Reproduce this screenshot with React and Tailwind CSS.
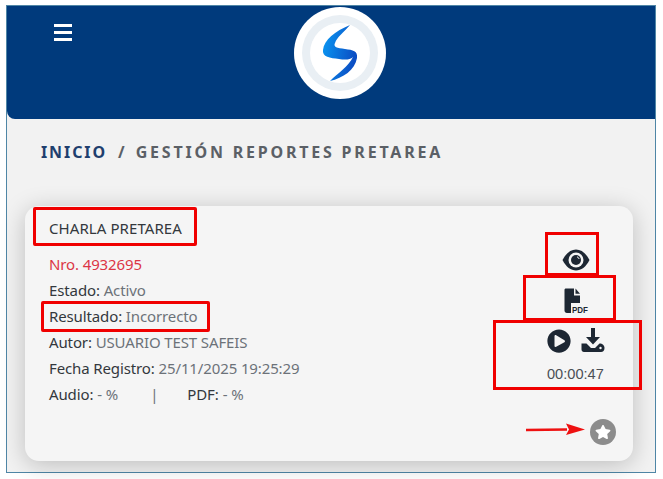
import { FaPlayCircle, FaStar } from 'react-icons/fa';

const Logo = () => (
  <div className="ml-[18px] flex h-[92px] w-[92px] items-center justify-center rounded-full bg-white">
    <div className="flex h-[76px] w-[76px] items-center justify-center rounded-full bg-[#e9eff4]">
      <div className="flex h-[60px] w-[60px] items-center justify-center rounded-full bg-white">
        <svg width="36" height="58" viewBox="0 0 36 58" className="shrink-0">
          <defs>
            <linearGradient id="logoBlue" x1="0" y1="0" x2="1" y2="0.3">
              <stop offset="0" stopColor="#0a9bf5" />
              <stop offset="1" stopColor="#0b4fc4" />
            </linearGradient>
          </defs>
          <path
            d="M28 1 C13 7 2 16 1 26 C0 33 8 34 17 35 C23 36 28 36 31 33 C27 42 15 50 8 57 C21 54 33 46 35 34 C36 27 31 26 23 25 C15 24 11 23 13 19 C15 13 22 8 28 1 Z"
            fill="url(#logoBlue)"
          />
        </svg>
      </div>
    </div>
  </div>
);

const EyeIcon = () => (
  <svg width="28" height="22" viewBox="0 0 28 22">
    <path d="M0.500 11 C4 4 9 0.500 14 0.500 C19 0.500 24 4 27.500 11 C24 18 19 21.500 14 21.500 C9 21.500 4 18 0.500 11 Z" fill="#1d2733" />
    <circle cx="14" cy="11" r="7.500" fill="#f5f5f5" />
    <circle cx="14" cy="11" r="5" fill="#1d2733" />
    <path d="M15 7.800 A3.400 3.400 0 0 1 17.200 10" stroke="#f5f5f5" strokeWidth="1" fill="none" />
  </svg>
);

const PdfIcon = () => (
  <svg width="25" height="26" viewBox="0 0 25 26" fill="#1d2733">
    <path d="M2 0.500 H10 V7.500 H16 V15 H7 V25 H3 C1.500 25 0.500 24 0.500 22.500 V2 C0.500 1 1 0.500 2 0.500 Z" />
    <path d="M11.500 0.500 L16 5.800 H11.500 Z" />
    <text x="8" y="24.500" fontSize="9" fontWeight="700" textLength="16" lengthAdjust="spacingAndGlyphs" fontFamily="'Liberation Sans', sans-serif">PDF</text>
  </svg>
);

const DownloadIcon = () => (
  <svg width="24" height="25" viewBox="0 0 24 25" fill="#1d2733">
    <path d="M10 0 H14 V9 H19 L12 16.500 L5 9 H10 Z" />
    <path d="M0.500 15.500 H5.500 L10 20 H14 L18.500 15.500 C21.500 15.500 23.500 17.500 23.500 20 C23.500 22.500 22 24 20 24 H3 C1.500 24 0.500 23 0.500 21.500 Z" />
    <circle cx="19.500" cy="20" r="1.200" fill="#f5f5f5" />
  </svg>
);

const Row = ({ label, value }) => (
  <p className="h-[26px] leading-[26px] whitespace-nowrap">
    <span className="text-[#33383d]">{label}:</span> <span className="text-[#6c7279]">{value}</span>
  </p>
);

const App = () => {
  return (
    <div className="relative h-[479px] w-[663px] overflow-hidden bg-white pt-[5px] pl-[6px] font-['Noto_Sans','Open_Sans',sans-serif]">
      <div className="flex h-[468px] w-[650px] flex-col border border-[#4f86a6] bg-[#f2f2f2]">
        <header className="flex h-[113px] shrink-0 justify-center rounded-bl-[8px] bg-[#003a7c] pt-[1px]">
          <Logo />
        </header>
        <div className="flex-1 px-[18px]">
          <h1 className="mt-[22px] ml-[16px] flex text-[16px] leading-[22px] font-bold whitespace-nowrap">
            <span className="tracking-[1.900px] text-[#1f3f6e]">INICIO</span>
            <span className="mx-[11px] text-[#5b6066]">/</span>
            <span className="tracking-[2.800px] text-[#5b6066]">GESTIÓN REPORTES PRETAREA</span>
          </h1>
          <section className="mt-[43px] h-[255px] w-[608px] rounded-[14px] bg-[#f5f5f5] pt-[10px] pl-[24px] text-[15px] tracking-[-0.120px] shadow-[0_4px_24px_rgba(0,0,0,0.22)]">
            <h2 className="text-[15px] leading-[24px] tracking-[0.080px] text-[#33383d]">CHARLA PRETAREA</h2>
            <div className="mt-[12px]">
              <p className="h-[25px] leading-[25px] text-[#dc3545]">Nro. 4932695</p>
              <Row label="Estado" value="Activo" />
              <Row label="Resultado" value="Incorrecto" />
              <Row label="Autor" value="USUARIO TEST SAFEIS" />
              <Row label="Fecha Registro" value="25/11/2025 19:25:29" />
              <div className="flex h-[26px] items-center whitespace-nowrap">
                <span className="text-[#33383d]">Audio:</span>
                <span className="ml-1 text-[#6c7279]">- %</span>
                <span className="ml-[32px] text-[#6c7279]">|</span>
                <span className="ml-[29px] text-[#33383d]">PDF:</span>
                <span className="ml-1 text-[#6c7279]">- %</span>
              </div>
            </div>
          </section>
        </div>
      </div>

      <button className="absolute top-[24px] left-[54px] flex flex-col gap-[4px]">
        <span className="h-[3px] w-[18px] bg-white" />
        <span className="h-[3px] w-[18px] bg-white" />
        <span className="h-[3px] w-[18px] bg-white" />
      </button>

      <div className="absolute top-[249px] left-[562px] flex"><EyeIcon /></div>
      <div className="absolute top-[288px] left-[564px] flex"><PdfIcon /></div>
      <FaPlayCircle className="absolute top-[329px] left-[547px] text-[24px] text-[#1d2733]" />
      <div className="absolute top-[328px] left-[581px] flex"><DownloadIcon /></div>
      <span className="absolute top-[364px] left-[547px] font-['Liberation_Sans',sans-serif] text-[14.600px] leading-[20px] text-[#4a4f55]">00:00:47</span>
      <div className="absolute top-[419px] left-[590px] flex h-[26px] w-[26px] items-center justify-center rounded-full bg-[#8c8c8c]">
        <FaStar className="text-[16px] text-white" />
      </div>

      {/* anotaciones rojas sobre la captura */}
      <div className="absolute top-[207px] left-[33px] h-[39px] w-[164px] rounded-[2px] border-[3px] border-[#f00000]" />
      <div className="absolute top-[301px] left-[41px] h-[31px] w-[169px] rounded-[2px] border-[3px] border-[#f00000]" />
      <div className="absolute top-[232px] left-[545px] h-[44px] w-[54px] border-[3px] border-[#f00000]" />
      <div className="absolute top-[275px] left-[523px] h-[46px] w-[93px] border-[3px] border-[#f00000]" />
      <div className="absolute top-[320px] left-[493px] h-[70px] w-[149px] border-[3px] border-[#f00000]" />
      <svg className="absolute top-[421px] left-[525px]" width="62" height="18" viewBox="0 0 62 18">
        <path d="M1 9 L42 8.500" stroke="#ee1111" strokeWidth="2.500" />
        <path d="M41 2.500 L60 8.500 L41 14 L44 8.500 Z" fill="#ee1111" />
      </svg>
    </div>
  );
};

export default App;
